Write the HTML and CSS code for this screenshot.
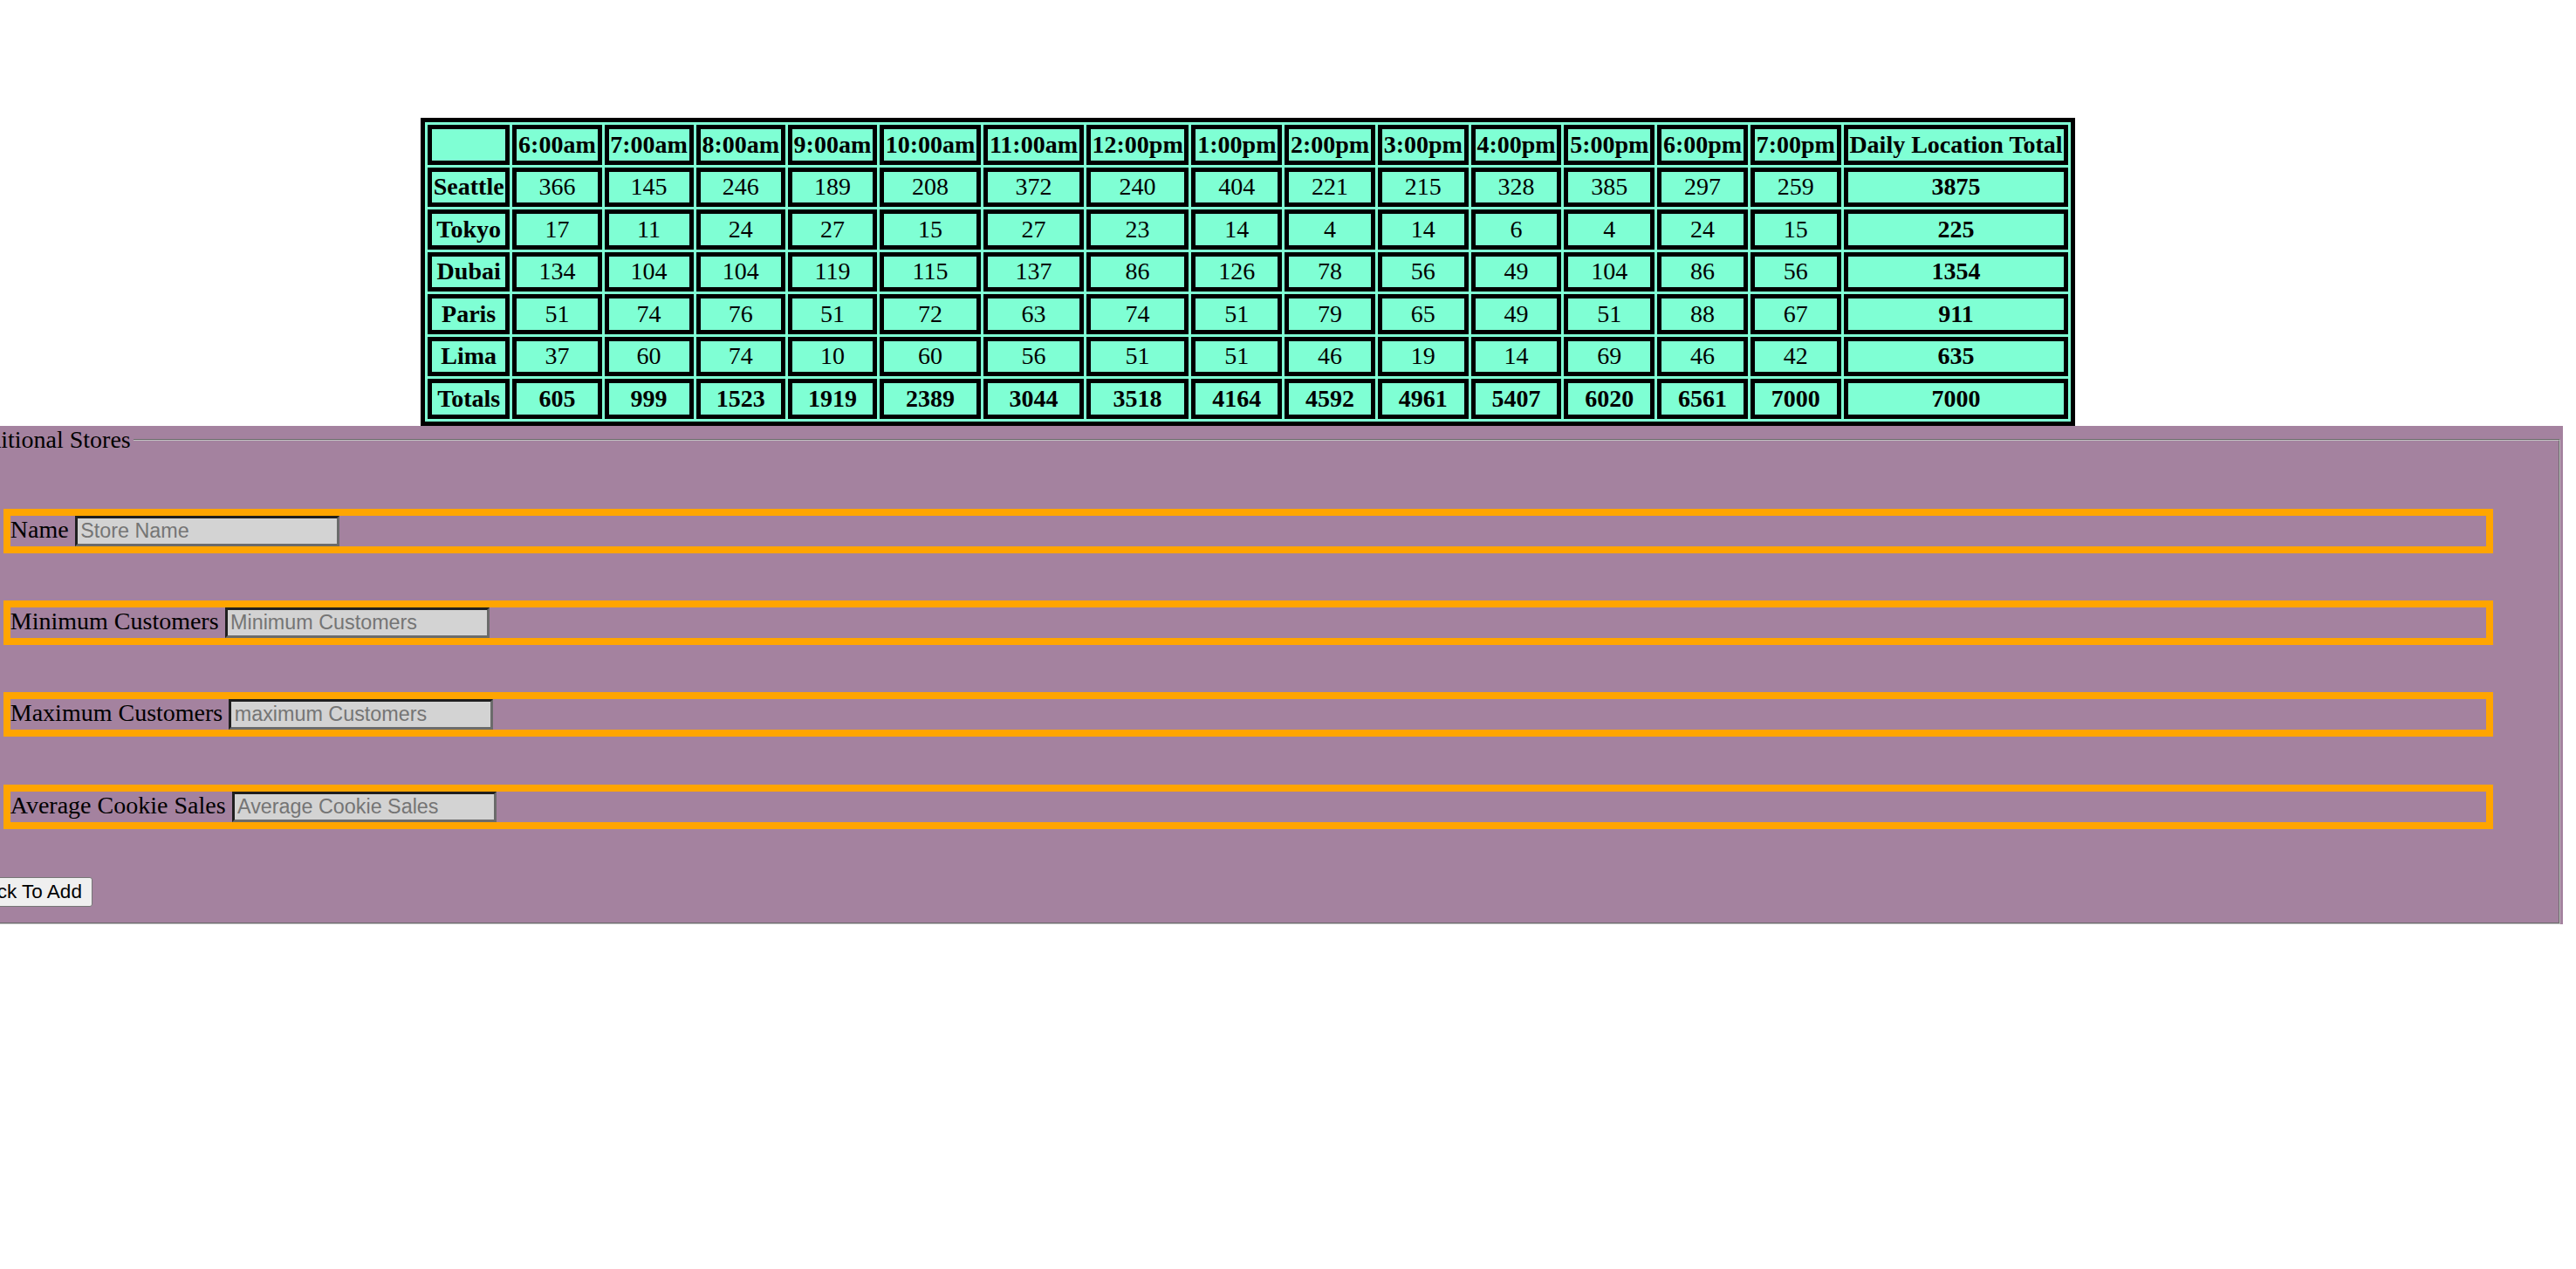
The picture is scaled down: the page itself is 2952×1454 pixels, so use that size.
FILE: index.html
```html
<!DOCTYPE html>
<html lang="en">
<head>
  <meta charset="UTF-8">
  <title>Salmon Cookies</title>
  <link rel="stylesheet" href="styles.css">
</head>
<body>
  <table class="sales-table">
    <thead>
      <tr>
        <th></th>
        <th>6:00am</th>
        <th>7:00am</th>
        <th>8:00am</th>
        <th>9:00am</th>
        <th>10:00am</th>
        <th>11:00am</th>
        <th>12:00pm</th>
        <th>1:00pm</th>
        <th>2:00pm</th>
        <th>3:00pm</th>
        <th>4:00pm</th>
        <th>5:00pm</th>
        <th>6:00pm</th>
        <th>7:00pm</th>
        <th>Daily Location Total</th>
      </tr>
    </thead>
    <tbody>
      <tr>
        <th>Seattle</th>
        <td>366</td><td>145</td><td>246</td><td>189</td><td>208</td><td>372</td><td>240</td>
        <td>404</td><td>221</td><td>215</td><td>328</td><td>385</td><td>297</td><td>259</td>
        <th>3875</th>
      </tr>
      <tr>
        <th>Tokyo</th>
        <td>17</td><td>11</td><td>24</td><td>27</td><td>15</td><td>27</td><td>23</td>
        <td>14</td><td>4</td><td>14</td><td>6</td><td>4</td><td>24</td><td>15</td>
        <th>225</th>
      </tr>
      <tr>
        <th>Dubai</th>
        <td>134</td><td>104</td><td>104</td><td>119</td><td>115</td><td>137</td><td>86</td>
        <td>126</td><td>78</td><td>56</td><td>49</td><td>104</td><td>86</td><td>56</td>
        <th>1354</th>
      </tr>
      <tr>
        <th>Paris</th>
        <td>51</td><td>74</td><td>76</td><td>51</td><td>72</td><td>63</td><td>74</td>
        <td>51</td><td>79</td><td>65</td><td>49</td><td>51</td><td>88</td><td>67</td>
        <th>911</th>
      </tr>
      <tr>
        <th>Lima</th>
        <td>37</td><td>60</td><td>74</td><td>10</td><td>60</td><td>56</td><td>51</td>
        <td>51</td><td>46</td><td>19</td><td>14</td><td>69</td><td>46</td><td>42</td>
        <th>635</th>
      </tr>
    </tbody>
    <tfoot>
      <tr>
        <th>Totals</th>
        <th>605</th><th>999</th><th>1523</th><th>1919</th><th>2389</th><th>3044</th><th>3518</th>
        <th>4164</th><th>4592</th><th>4961</th><th>5407</th><th>6020</th><th>6561</th><th>7000</th>
        <th>7000</th>
      </tr>
    </tfoot>
  </table>

  <form class="store-form">
    <fieldset>
      <legend>Additional Stores</legend>

      <div class="field">
        <label for="name">Name</label>
        <input type="text" id="name" placeholder="Store Name">
      </div>

      <div class="field">
        <label for="min">Minimum Customers</label>
        <input type="text" id="min" placeholder="Minimum Customers">
      </div>

      <div class="field">
        <label for="max">Maximum Customers</label>
        <input type="text" id="max" placeholder="maximum Customers">
      </div>

      <div class="field">
        <label for="avg">Average Cookie Sales</label>
        <input type="text" id="avg" placeholder="Average Cookie Sales">
      </div>

      <button type="submit" class="add-button">Click To Add</button>
    </fieldset>
  </form>
</body>
</html>
```

FILE: styles.css
```css
body {
  margin: 0;
  font-family: "Liberation Serif", "Times New Roman", serif;
  font-size: 28px;
  color: #000;
  background: #fff;
}

.sales-table {
  margin: 135px 0 0 482px;
  border: 5px solid #000;
  border-spacing: 3px;
  background: aquamarine;
  font-size: 28px;
}

.sales-table th,
.sales-table td {
  border: 5px solid #000;
  padding: 1.75px;
  text-align: center;
}

.store-form {
  margin: 0 15px 0 -77px;
  background: #a4829f;
}

.store-form fieldset {
  margin: 0 3px 0 3.5px;
  border: 2px groove #c0c0c0;
  padding: 9px 21px 17.5px;
}

.store-form legend {
  padding: 0 3.5px;
}

.field {
  margin: 54.3px;
  border: 8px solid orange;
}

.field input {
  box-sizing: border-box;
  width: 303px;
  height: 35px;
  padding: 0 3.5px;
  font-family: "Liberation Sans", Arial, sans-serif;
  font-size: 23.33px;
  background: lightgray;
  border: 3px solid;
  border-color: #1f1f1f #6b6b6b #6b6b6b #1f1f1f;
}

.field input::placeholder {
  color: #757575;
}

.add-button {
  margin-left: 9px;
  font-family: "Liberation Sans", Arial, sans-serif;
  font-size: 22.5px;
  padding: 3.25px 11px;
  color: #000;
  background: #efefef;
  border: 1px solid #767676;
  border-radius: 3px;
}
```
